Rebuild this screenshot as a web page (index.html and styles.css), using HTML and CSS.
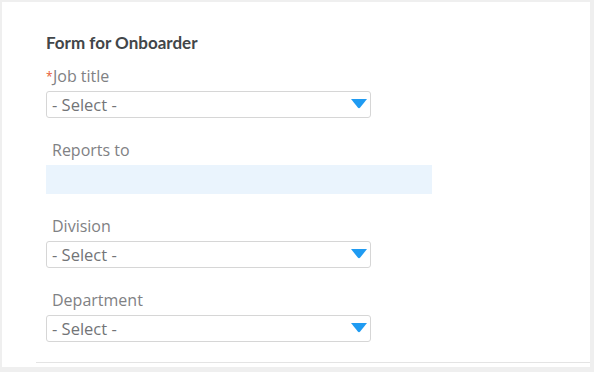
FILE: index.html
```html
<!doctype html>
<html lang="en">
<head>
  <title>Form for Onboarder</title>
  <meta charset="utf-8">
  <meta name="viewport" content="width=device-width, initial-scale=1">
  <link rel="stylesheet" href="styles.css">
</head>
<body>
  <div class="card">
    <form class="onboard-form">
      <h2 class="form-title">Form for Onboarder</h2>

      <div class="field">
        <label class="field-label required"><span class="star">*</span>Job title</label>
        <div class="select-box">
          <span class="select-value">- Select -</span>
          <svg class="select-arrow" width="18" height="11" viewBox="0 0 18 11">
            <path d="M1 1 H17 L10.2 9.6 Q9 11 7.8 9.6 Z" fill="#1f9bf2"/>
          </svg>
        </div>
      </div>

      <div class="field">
        <label class="field-label">Reports to</label>
        <div class="text-box"></div>
      </div>

      <div class="field">
        <label class="field-label">Division</label>
        <div class="select-box">
          <span class="select-value">- Select -</span>
          <svg class="select-arrow" width="18" height="11" viewBox="0 0 18 11">
            <path d="M1 1 H17 L10.2 9.6 Q9 11 7.8 9.6 Z" fill="#1f9bf2"/>
          </svg>
        </div>
      </div>

      <div class="field">
        <label class="field-label">Department</label>
        <div class="select-box">
          <span class="select-value">- Select -</span>
          <svg class="select-arrow" width="18" height="11" viewBox="0 0 18 11">
            <path d="M1 1 H17 L10.2 9.6 Q9 11 7.8 9.6 Z" fill="#1f9bf2"/>
          </svg>
        </div>
      </div>
    </form>
  </div>
</body>
</html>
```

FILE: styles.css
```css
html, body {
  margin: 0;
  padding: 0;
}

body {
  background-color: #efefef;
  padding: 2px 4px 5px 2px;
  height: 372px;
  box-sizing: border-box;
  font-family: "Open Sans", "Liberation Sans", sans-serif;
}

.card {
  background-color: #ffffff;
  height: 365px;
  padding-left: 34px;
  box-sizing: border-box;
}

.onboard-form {
  height: 361px;
  box-sizing: border-box;
  border-bottom: 1px solid #e4e4e4;
  padding: 31px 0 0 10px;
}

.form-title {
  margin: 0 0 14px 0;
  font-family: Lato, "Liberation Sans", sans-serif;
  font-size: 17px;
  line-height: 20px;
  font-weight: bold;
  color: #424649;
}

.field {
  margin-bottom: 23px;
}

.field-label {
  display: block;
  height: 18px;
  line-height: 18px;
  margin-bottom: 6px;
  padding-left: 6px;
  font-size: 16px;
  color: #7f8184;
}

.field-label.required {
  padding-left: 0;
}

.star {
  display: inline-block;
  width: 7px;
  color: #e65a30;
  font-size: 12px;
  vertical-align: 1px;
}

.select-box {
  width: 325px;
  height: 27px;
  border: 1px solid #d6d6d6;
  border-radius: 3px;
  box-sizing: border-box;
  display: flex;
  align-items: center;
  justify-content: space-between;
  padding: 0 2px 0 5px;
}

.select-value {
  font-size: 16.5px;
  color: #727477;
}

.select-arrow {
  display: block;
  margin-top: -3px;
}

.text-box {
  width: 386px;
  height: 29px;
  background-color: #eaf4fd;
}
```
